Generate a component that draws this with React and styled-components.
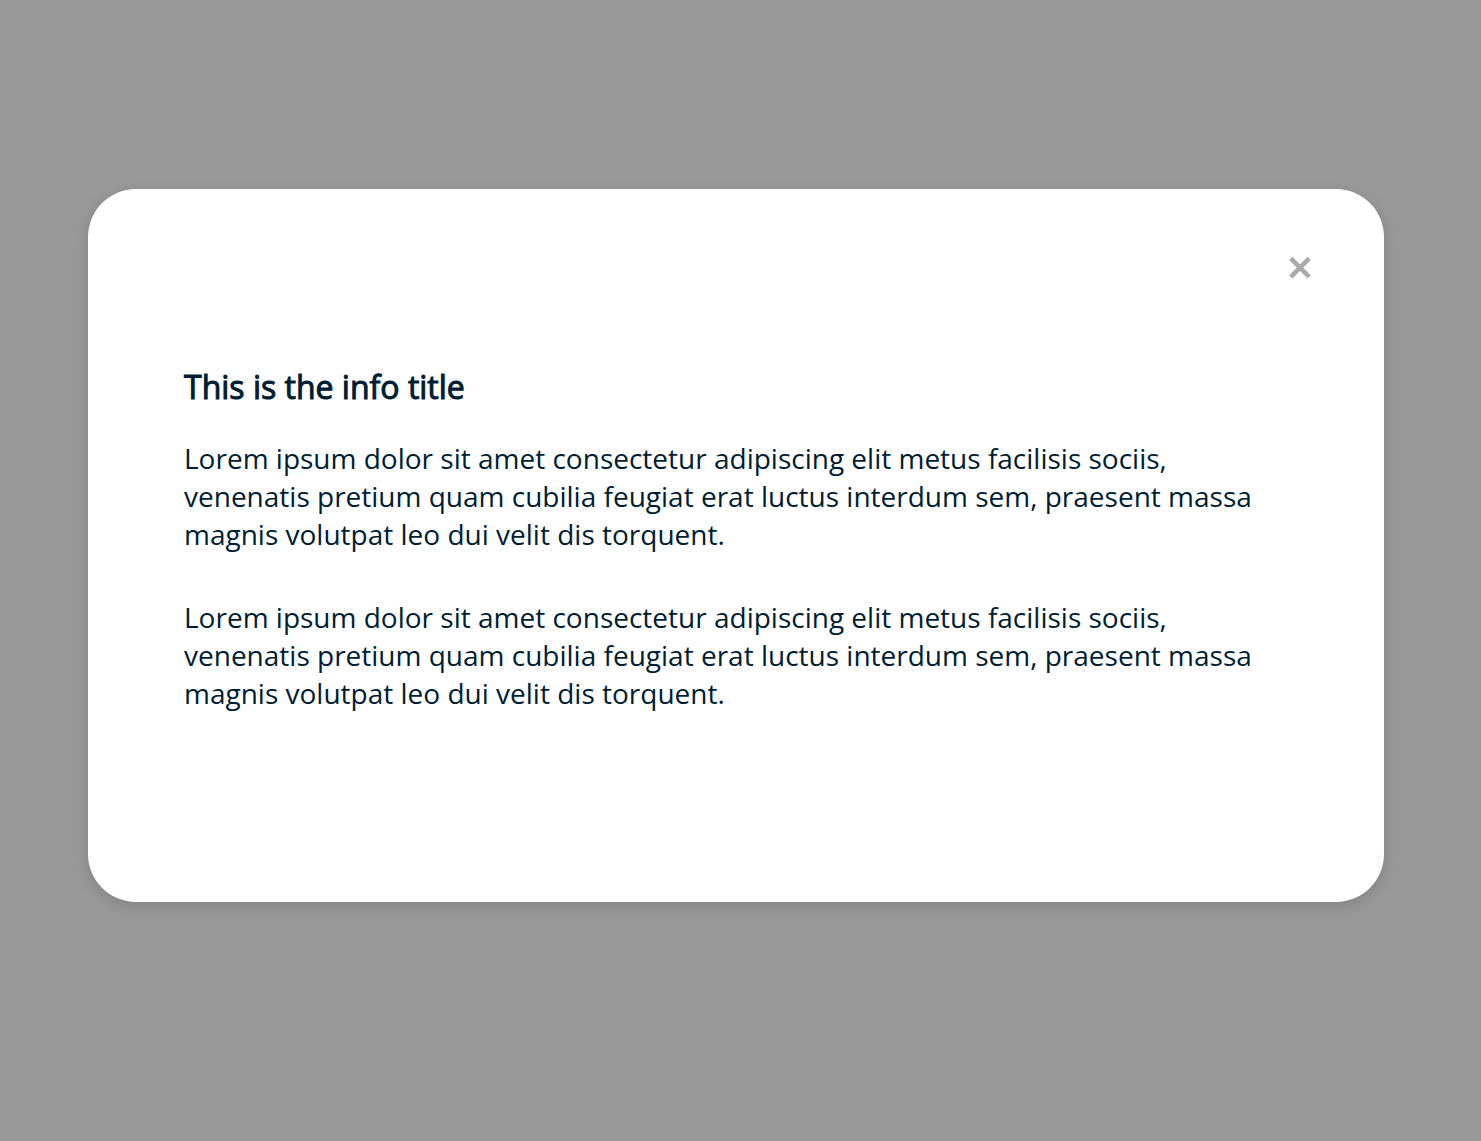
import React, { useState } from "react";
import styled, { createGlobalStyle } from "styled-components";

const GlobalStyle = createGlobalStyle`
  *, *::before, *::after { box-sizing: border-box; }
  body {
    margin: 0;
    background: #999999;
    color: #001e33;
    font-family: "Open Sans", sans-serif;
  }
`;

const Overlay = styled.div`
  display: flex;
  align-items: center;
  justify-content: center;
  min-height: 100vh;
  padding: 0 97px 50px 88px;
  background: #999999;
`;

const Dialog = styled.section`
  width: 100%;
  padding: 64px 72px 190px 96px;
  border-radius: 48px;
  background: #ffffff;
  box-shadow: 0 4px 16px rgba(0, 0, 0, 0.16);
`;

const Header = styled.header`
  display: flex;
  justify-content: flex-end;
`;

const CloseButton = styled.button`
  display: flex;
  padding: 3px 0;
  border: 0;
  background: none;
  color: #aaaaaa;
  cursor: pointer;
`;

const Content = styled.div`
  display: flex;
  flex-direction: column;
  gap: 32px;
  padding: 84px 24px 0 0;
`;

const Title = styled.h1`
  margin: 0;
  font-size: 32px;
  line-height: 40px;
  font-weight: 400;
  -webkit-text-stroke: 1px currentColor;
`;

const Paragraphs = styled.div`
  display: flex;
  flex-direction: column;
  gap: 45px;
`;

const Paragraph = styled.p`
  margin: 0;
  font-size: 28px;
  line-height: 38px;
`;

const paragraphs = [
  "Lorem ipsum dolor sit amet consectetur adipiscing elit metus facilisis sociis, venenatis pretium quam cubilia feugiat erat luctus interdum sem, praesent massa magnis volutpat leo dui velit dis torquent.",
  "Lorem ipsum dolor sit amet consectetur adipiscing elit metus facilisis sociis, venenatis pretium quam cubilia feugiat erat luctus interdum sem, praesent massa magnis volutpat leo dui velit dis torquent.",
];

export default function App() {
  const [open, setOpen] = useState(true);
  return (
    <>
      <GlobalStyle />
      <Overlay>
        {open && (
          <Dialog role="dialog" aria-modal="true" aria-labelledby="info-title">
            <Header>
              <CloseButton type="button" aria-label="Close" onClick={() => setOpen(false)}>
                <svg width="24" height="24" viewBox="0 0 24 24" aria-hidden="true">
                  <path d="M2.8 2.4L21.2 20.8M21.2 2.4L2.8 20.8" stroke="currentColor" strokeWidth="4.6" />
                </svg>
              </CloseButton>
            </Header>
            <Content>
              <Title id="info-title">This is the info title</Title>
              <Paragraphs>
                {paragraphs.map((text, index) => (
                  <Paragraph key={index}>{text}</Paragraph>
                ))}
              </Paragraphs>
            </Content>
          </Dialog>
        )}
      </Overlay>
    </>
  );
}
